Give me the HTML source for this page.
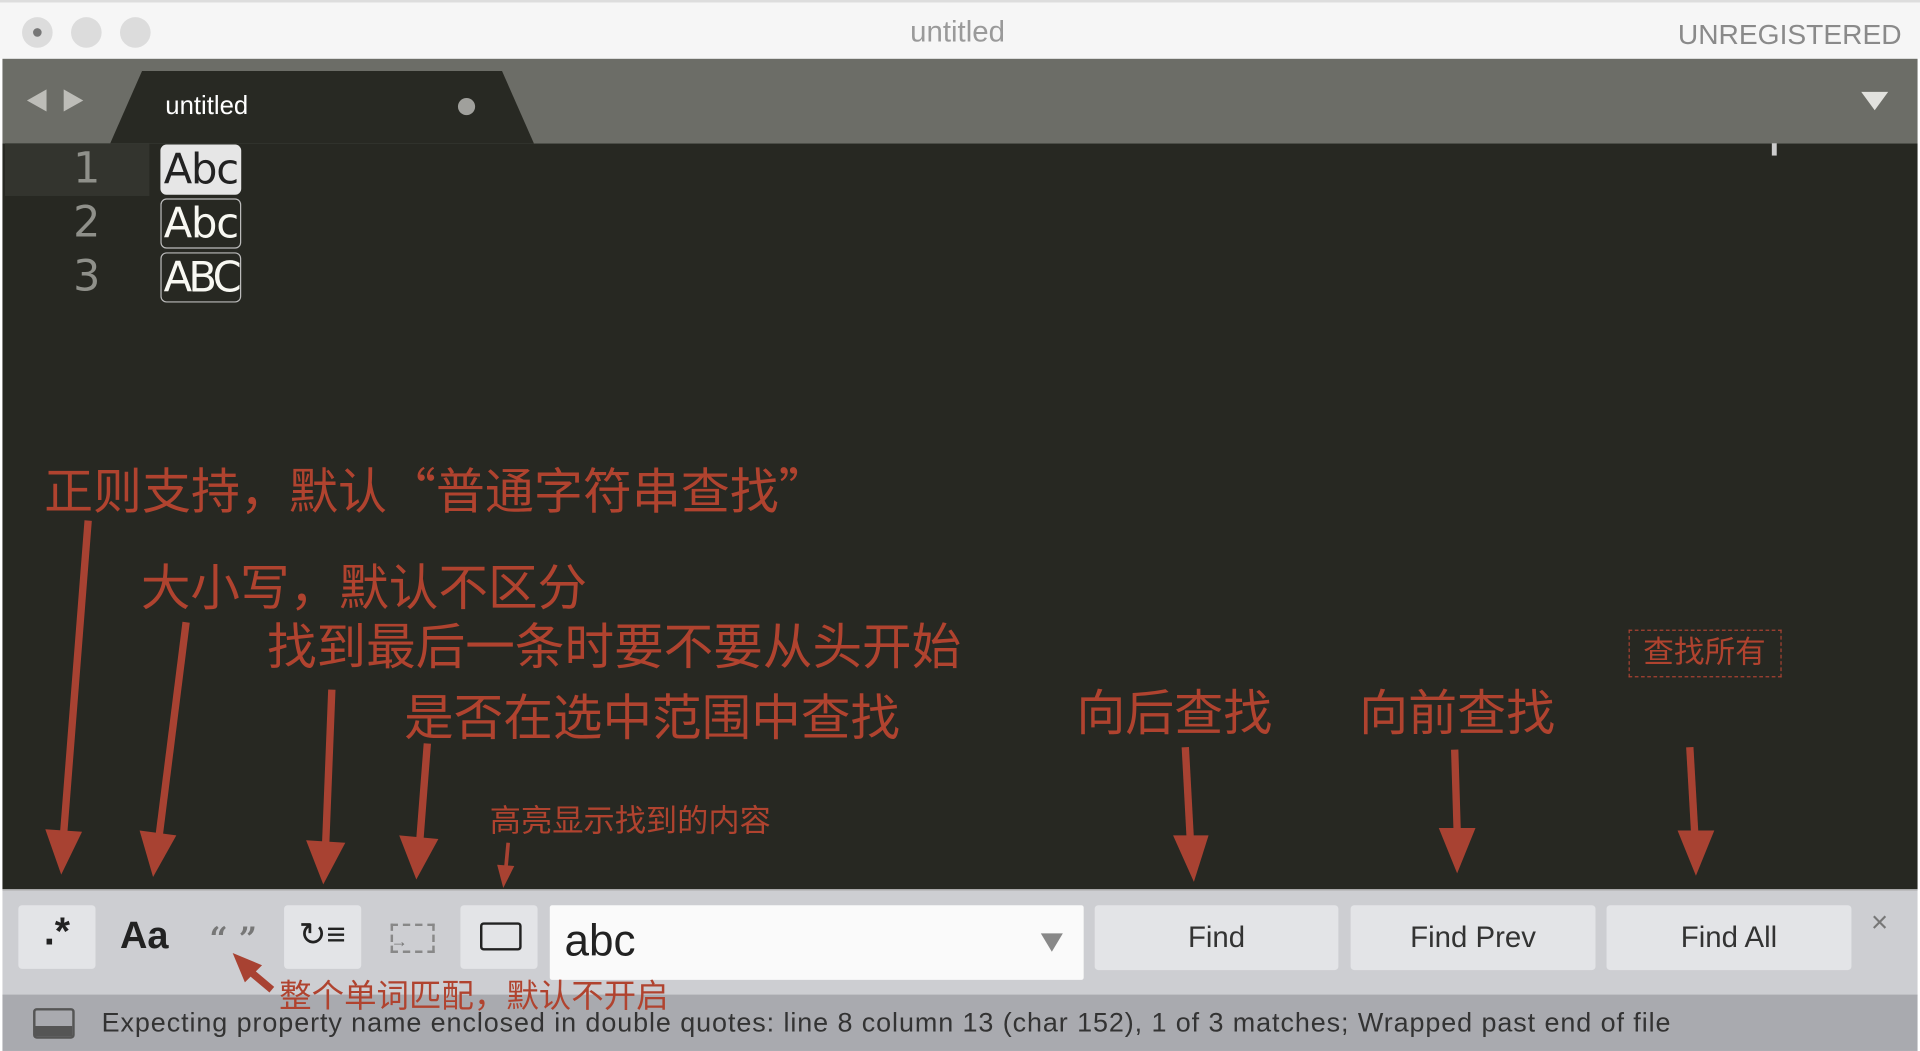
<!DOCTYPE html>
<html><head><meta charset="utf-8">
<style>
html,body{margin:0;padding:0;width:1920px;height:1051px;overflow:hidden;background:#fff}
#s{position:absolute;left:0;top:0;width:1568px;height:858px;transform:scale(1.22449,1.2249);transform-origin:0 0;font-family:"Liberation Sans","Noto Sans CJK SC",sans-serif;overflow:hidden}
.a{position:absolute}
.cn{position:absolute;color:#b0432f;font-family:"Noto Sans CJK SC","WenQuanYi Zen Hei",sans-serif;white-space:nowrap;line-height:1}
.btn{position:absolute;top:739px;height:53px;background:#e3e4e7;border-radius:3px;color:#333;font-size:24px;text-align:center;line-height:53px}
.tog{position:absolute;top:739px;width:63px;height:52px;border-radius:3px}
.ln{position:absolute;left:40px;width:42px;text-align:right;color:#8f908a;font-family:"DejaVu Sans",sans-serif;font-size:35px;line-height:44px}
.abc{position:absolute;left:131px;width:66px;height:41px;border:1.5px solid #bbb;border-radius:5px;color:#f8f8f2;font-family:"DejaVu Sans",sans-serif;font-size:34px;line-height:41px;text-align:center;box-sizing:border-box;letter-spacing:-1px;overflow:hidden}
</style></head><body><div id="s">
<div class="a" style="left:0;top:0;width:1568px;height:48px;background:#f6f6f6;border-top:2px solid #ddd;box-sizing:border-box"></div>
<div class="a" style="left:18px;top:14px;width:25px;height:25px;border-radius:50%;background:#dcdcdc"></div>
<div class="a" style="left:27px;top:23px;width:7px;height:7px;border-radius:50%;background:#777"></div>
<div class="a" style="left:58px;top:14px;width:25px;height:25px;border-radius:50%;background:#dcdcdc"></div>
<div class="a" style="left:98px;top:14px;width:25px;height:25px;border-radius:50%;background:#dcdcdc"></div>
<div class="a" style="left:682px;top:13px;width:200px;text-align:center;color:#9a9a9a;font-size:24px">untitled</div>
<div class="a" style="left:1340px;top:15px;width:213px;text-align:right;color:#8a8a8a;font-size:23px">UNREGISTERED</div>
<div class="a" style="left:2px;top:48px;width:1564px;height:69px;background:#6c6d67"></div>
<svg class="a" style="left:0;top:0" width="1568" height="858">
<polygon points="22,82 38,73 38,91" fill="#bdbdb8"/><polygon points="68,82 52,73 52,91" fill="#bdbdb8"/>
<polygon points="90,117 116,58 410,58 436,117" fill="#282923"/>
<circle cx="381" cy="87" r="7" fill="#a0a09c"/>
<polygon points="1520,75 1542,75 1531,90" fill="#e2e2de"/>
</svg>
<div class="a" style="left:135px;top:75px;color:#fff;font-size:21px">untitled</div>
<div class="a" style="left:2px;top:117px;width:1564px;height:609px;background:#272822"></div>
<div class="a" style="left:4px;top:117px;width:118px;height:43px;background:#33342e"></div>
<div class="a" style="left:1447px;top:117px;width:4px;height:10px;background:#ccc"></div>
<div class="ln" style="top:116px">1</div>
<div class="ln" style="top:160px">2</div>
<div class="ln" style="top:204px">3</div>
<div class="abc" style="top:118px;background:#e6e6e6;color:#222;border-color:#e6e6e6">Abc</div>
<div class="abc" style="top:162px">Abc</div>
<div class="abc" style="top:206px;letter-spacing:-3px">ABC</div>
<div class="a" style="left:2px;top:726px;width:1564px;height:86px;background:#cdced2;border-top:1px solid #aaa"></div>
<div class="tog" style="left:15px;background:#e3e4e7"></div>
<div class="a" style="left:15px;top:742px;width:63px;text-align:center;font-size:32px;font-weight:bold;color:#222">.*</div>
<div class="a" style="left:98px;top:746px;font-size:31px;font-weight:bold;color:#222">Aa</div>
<div class="a" style="left:171px;top:752px;font-size:26px;font-weight:bold;color:#777;font-family:'DejaVu Serif',serif">“ ”</div>
<div class="tog" style="left:232px;background:#e3e4e7"></div>
<div class="a" style="left:244px;top:748px;font-size:27px;color:#222">↻≡</div>
<div class="a" style="left:319px;top:754px;width:32px;height:20px;border:2px dashed #888"></div>
<div class="a" style="left:319px;top:760px;font-size:14px;color:#777">→</div>
<div class="tog" style="left:376px;background:#e3e4e7"></div>
<div class="a" style="left:392px;top:753px;width:30px;height:19px;border:2.5px solid #222;border-radius:3px"></div>
<div class="a" style="left:449px;top:739px;width:436px;height:61px;background:#fafafa;border-radius:2px"></div>
<div class="a" style="left:461px;top:747px;font-size:36px;color:#222">abc</div>
<svg class="a" style="left:0;top:0" width="1568" height="858"><polygon points="850,762 868,762 859,777" fill="#888"/></svg>
<div class="btn" style="left:894px;width:199px">Find</div>
<div class="btn" style="left:1103px;width:200px">Find Prev</div>
<div class="btn" style="left:1312px;width:200px">Find All</div>
<div class="a" style="left:1528px;top:740px;font-size:24px;color:#777">×</div>
<div class="a" style="left:2px;top:812px;width:1564px;height:46px;background:#a9aaaf"></div>
<div class="a" style="left:27px;top:823px;width:30px;height:21px;border:2px solid #555;border-radius:3px;background:linear-gradient(#a9aaaf 60%,#555 60%)"></div>
<div class="a" style="left:83px;top:822px;font-size:22px;letter-spacing:0.75px;color:#333;white-space:nowrap">Expecting property name enclosed in double quotes: line 8 column 13 (char 152), 1 of 3 matches; Wrapped past end of file</div>
<div class="cn" style="left:36px;top:378px;font-size:40px">正则支持，默认“普通字符串查找”</div>
<div class="cn" style="left:115px;top:457px;font-size:40.5px">大小写，默认不区分</div>
<div class="cn" style="left:218px;top:505px;font-size:40.5px">找到最后一条时要不要从头开始</div>
<div class="cn" style="left:330px;top:563px;font-size:40.5px">是否在选中范围中查找</div>
<div class="cn" style="left:400px;top:656px;font-size:25.5px">高亮显示找到的内容</div>
<div class="cn" style="left:879px;top:559px;font-size:40px">向后查找</div>
<div class="cn" style="left:1110px;top:559px;font-size:40px">向前查找</div>
<div class="a" style="left:1330px;top:514px;width:123px;height:37px;border:1px dashed #a84232"></div>
<div class="cn" style="left:1342px;top:519px;font-size:25px">查找所有</div>
<div class="cn" style="left:228px;top:798px;font-size:26.5px">整个单词匹配，默认不开启</div>
<svg class="a" style="left:0;top:0" width="1568" height="858">
<g stroke="#a84232" stroke-width="6" fill="#a84232">
<line x1="72" y1="425" x2="52" y2="680"/><polygon stroke="none" points="37,677 67,679 50,714"/>
<line x1="152" y1="508" x2="130" y2="682"/><polygon stroke="none" points="114,678 144,682 125,716"/>
<line x1="271" y1="563" x2="266" y2="688"/><polygon stroke="none" points="250,686 282,688 264,722"/>
<line x1="349" y1="607" x2="343" y2="684"/><polygon stroke="none" points="326,682 358,685 340,718"/>
<line x1="415" y1="688" x2="413" y2="710" stroke-width="3"/><polygon stroke="none" points="406,706 420,707 411,725"/>
<line x1="968" y1="610" x2="972" y2="684"/><polygon stroke="none" points="958,682 987,682 975,720"/>
<line x1="1188" y1="612" x2="1190" y2="678"/><polygon stroke="none" points="1175,676 1205,676 1190,713"/>
<line x1="1380" y1="610" x2="1384" y2="680"/><polygon stroke="none" points="1370,678 1400,678 1385,715"/>
<line x1="222" y1="808" x2="203" y2="792"/><polygon stroke="none" points="190,778 214,788 200,802"/>
</g></svg>
</div></body></html>
